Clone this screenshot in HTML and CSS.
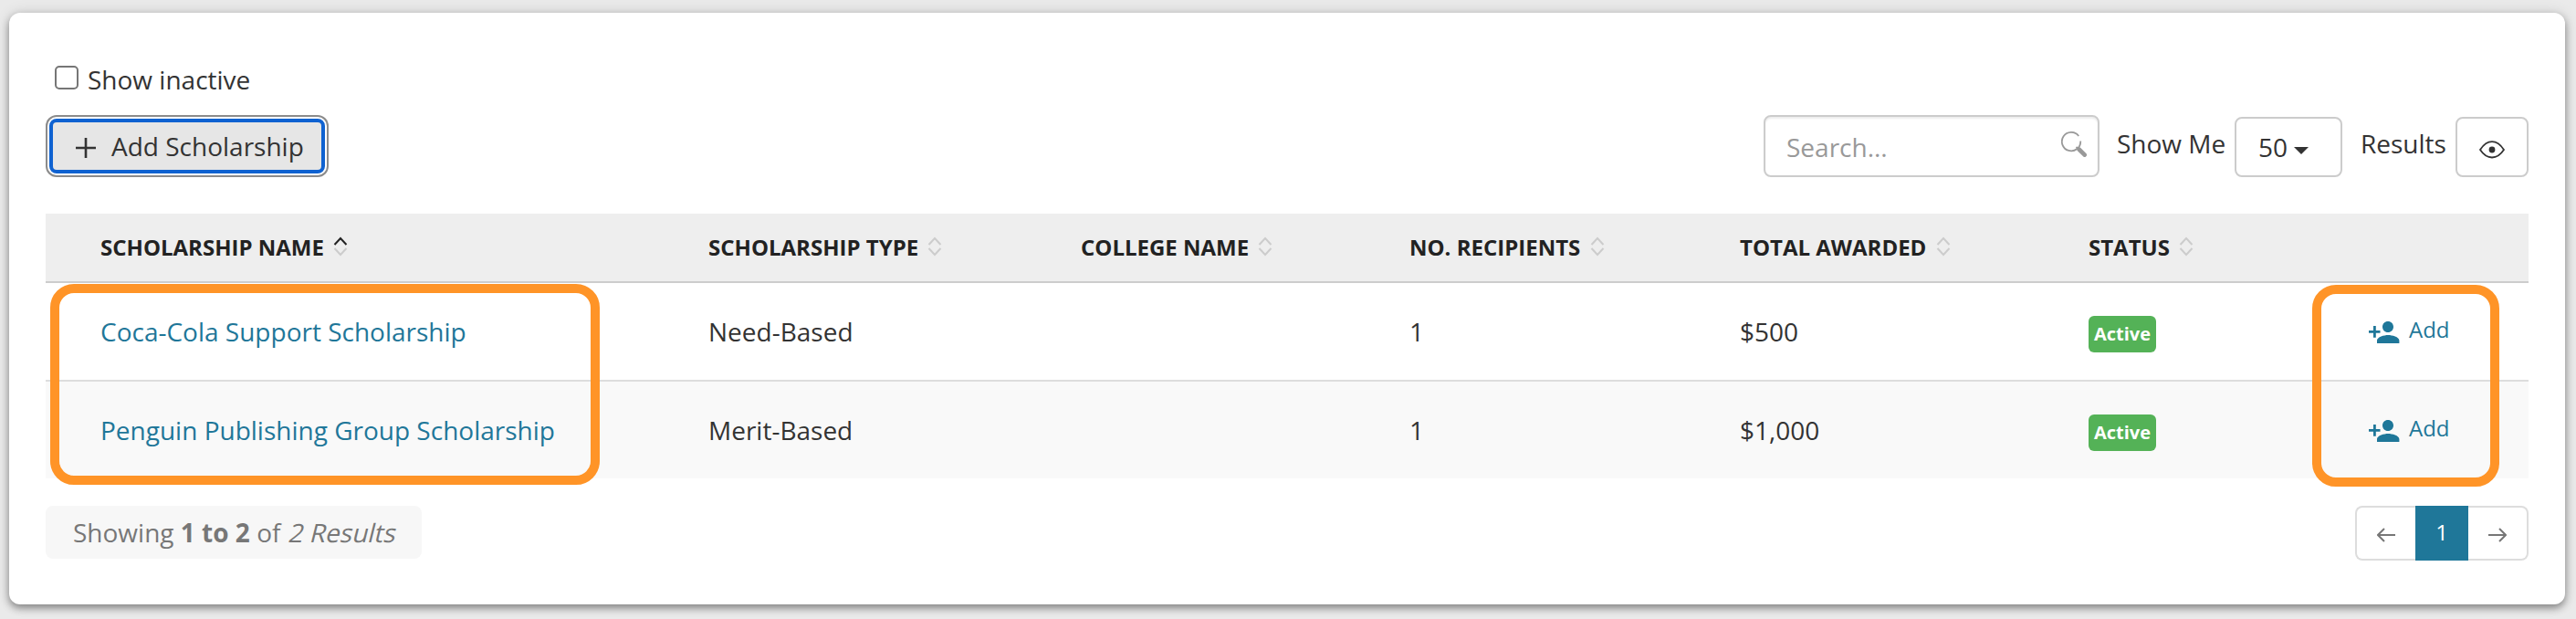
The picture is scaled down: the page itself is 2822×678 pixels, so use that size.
FILE: index.html
```
<!DOCTYPE html>
<html lang="en">
<head>
  <meta charset="UTF-8" />
  <meta name="viewport" content="width=device-width, initial-scale=1.0" />
  <title>Scholarships</title>
  <link rel="stylesheet" href="styles.css">
</head>
<body>
  <svg class="sprite">
    <symbol id="sort" viewBox="0 0 16 22">
      <path class="up" d="M1.5 9 L8 2 L14.5 9" />
      <path class="down" d="M1.5 13 L8 20 L14.5 13" />
    </symbol>
    <symbol id="person-add" viewBox="0 0 34 24">
      <path d="M21 0c3.400 0 6 2.600 6 6s-2.600 6-6 6-6-2.600-6-6 2.600-6 6-6zM9 24v-3c0-4 8-6 12.200-6s12.200 2 12.200 6v3zM5 5h2.800v5h4.700v2.800h-4.700v5h-2.800v-5h-5v-2.800h5z" />
    </symbol>
  </svg>

  <div class="card">
    <label class="inactive"><input type="checkbox"> Show inactive</label>

    <div class="toolbar">
      <button class="btn-add">
        <svg width="22" height="22" viewBox="0 0 22 22"><path d="M11 0v22M0 11h22" /></svg>
        Add Scholarship
      </button>
      <div class="tools">
        <div class="search">
          <input type="text" placeholder="Search...">
          <svg width="28" height="28" viewBox="0 0 28 28">
            <path class="ring" d="M19.200 5A10.200 10.200 0 1 0 21.200 10.500" />
            <path class="handle" d="M19.500 19.500l6.200 6.200" />
            <path class="ring" d="M16.500 17l3 3" />
          </svg>
        </div>
        <span class="show-me">Show Me</span>
        <button class="btn btn-count">50 <i class="caret"></i></button>
        <span class="results">Results</span>
        <button class="btn btn-eye">
          <svg width="28" height="20" viewBox="0 0 28 20">
            <path d="M1 10C5 4 9.500 1.200 14 1.200S23 4 27 10C23 16 18.500 18.500 14 18.500S5 16 1 10z" />
            <circle cx="14" cy="10" r="3.400" />
          </svg>
        </button>
      </div>
    </div>

    <div class="table-wrap">
      <table>
        <thead>
          <tr>
            <th class="col-name">Scholarship Name <svg class="sort asc"><use href="#sort" /></svg></th>
            <th class="col-type">Scholarship Type <svg class="sort"><use href="#sort" /></svg></th>
            <th class="col-college">College Name <svg class="sort"><use href="#sort" /></svg></th>
            <th class="col-recipients">No. Recipients <svg class="sort"><use href="#sort" /></svg></th>
            <th class="col-total">Total Awarded <svg class="sort"><use href="#sort" /></svg></th>
            <th class="col-status">Status <svg class="sort"><use href="#sort" /></svg></th>
            <th></th>
          </tr>
        </thead>
        <tbody>
          <tr>
            <td><a href="#">Coca-Cola Support Scholarship</a></td>
            <td>Need-Based</td>
            <td></td>
            <td>1</td>
            <td>$500</td>
            <td><span class="badge">Active</span></td>
            <td><a href="#" class="add"><svg width="34" height="24"><use href="#person-add" /></svg>Add</a></td>
          </tr>
          <tr>
            <td><a href="#">Penguin Publishing Group Scholarship</a></td>
            <td>Merit-Based</td>
            <td></td>
            <td>1</td>
            <td>$1,000</td>
            <td><span class="badge">Active</span></td>
            <td><a href="#" class="add"><svg width="34" height="24"><use href="#person-add" /></svg>Add</a></td>
          </tr>
        </tbody>
      </table>
      <div class="mark mark-names"></div>
      <div class="mark mark-actions"></div>
    </div>

    <div class="footer">
      <div class="showing">Showing <b>1 to 2</b> of <i class="total">2 Results</i></div>
      <div class="pager">
        <a href="#"><svg width="20" height="16" viewBox="0 0 20 16"><path d="M20 8H1M8 1L1 8l7 7" /></svg></a>
        <a href="#" class="current">1</a>
        <a href="#"><svg width="20" height="16" viewBox="0 0 20 16"><path d="M0 8h19M12 1l7 7-7 7" /></svg></a>
      </div>
    </div>
  </div>
</body>
</html>
```
FILE: styles.css
```
* { box-sizing: border-box; }
body { margin: 0; padding: 14px 12px 16px 10px; height: 678px; overflow: hidden; background: #eaeaea; font-family: "Open Sans", sans-serif; font-size: 28px; line-height: 40px; color: #333; }
a { color: #1f7799; text-decoration: none; }
button, input { font: inherit; color: inherit; margin: 0; }
svg { display: block; }
.sprite { position: absolute; width: 0; height: 0; }

.card { height: 648px; padding: 53px 40px 0; background: white; border-radius: 12px; box-shadow: 0 4px 8px rgba(0,0,0,0.4), 0 0 16px rgba(0,0,0,0.12); }

.inactive { display: flex; align-items: center; gap: 10px; height: 40px; padding-left: 10px; }
.inactive input { appearance: none; width: 26px; height: 26px; margin-top: -4px; background: white; border: 2px solid #767676; border-radius: 5px; }

/* toolbar */
.toolbar { display: flex; justify-content: space-between; margin-top: 19px; height: 68px; }
.btn-add { display: flex; align-items: center; gap: 17px; width: 302px; height: 60px; margin: 4px; padding: 0 0 1px 25px; white-space: nowrap; background: #e6e6e6; border: 4px solid #0f62d1; border-radius: 8px; box-shadow: 0 0 0 2px white, 0 0 0 4px #8b8b8b; }
.btn-add svg { margin-top: 5px; }
.btn-add path { stroke: #333; stroke-width: 2.6; }
.tools { display: flex; align-items: flex-end; }
.search { display: flex; align-items: center; width: 368px; height: 68px; padding: 0 12px 0 23px; border: 2px solid #ccc; border-radius: 8px; box-shadow: inset 0 2px 2px rgba(0,0,0,0.08); }
.search input { flex: 1; width: 0; height: 40px; padding: 2px 0 0; border: 0; outline: 0; background: none; }
.search input::placeholder { color: #999; opacity: 1; }
.search svg { margin-top: -4px; fill: none; stroke: #999; }
.ring { stroke-width: 1.8; }
.handle { stroke-width: 4.6; stroke-linecap: round; }
.show-me { width: 148px; padding-left: 19px; margin-bottom: 17px; white-space: nowrap; }
.results { width: 124px; padding-left: 20px; margin-bottom: 17px; }
.btn { display: flex; align-items: center; height: 66px; padding: 0; background: white; border: 2px solid #ccc; border-radius: 8px; }
.btn-count { width: 118px; padding-left: 24px; gap: 7px; }
.caret { margin-top: 7px; border: 8px solid transparent; border-top-color: #333; border-bottom: 0; }
.btn-eye { width: 80px; justify-content: center; }
.btn-eye svg { margin-top: 6px; fill: none; stroke: #333; stroke-width: 1.8; }
.btn-eye circle { fill: #333; stroke: none; }

/* table */
.table-wrap { position: relative; margin-top: 40px; }
table { width: 100%; table-layout: fixed; border-collapse: separate; border-spacing: 0; }
th, td { padding: 0; text-align: left; vertical-align: middle; white-space: nowrap; }
th { height: 76px; background: #eee; border-bottom: 2px solid #ccc; color: #222; font-size: 24px; text-transform: uppercase; }
td { height: 106px; }
th:first-child, td:first-child { padding-left: 60px; }
tbody tr + tr td { height: 108px; background: #f9f9f9; border-top: 2px solid #ddd; }
.col-name { width: 726px; }
.col-type { width: 408px; }
.col-college { width: 360px; }
.col-recipients { width: 362px; }
.col-total { width: 382px; }
.col-status { width: 307px; }
.sort { display: inline-block; width: 16px; height: 22px; margin-left: 4px; vertical-align: -1px; fill: none; stroke: #ccc; stroke-width: 2; }
.asc { color: #222; }
.up { stroke: currentColor; }
.sort:not(.asc) { color: #ccc; }
.badge { display: block; width: 74px; height: 40px; margin: 5px 0 0; border-radius: 6px; background: #54b257; color: white; font-size: 20px; font-weight: bold; text-align: center; }
.add { display: flex; align-items: center; gap: 10px; font-size: 24px; margin-top: -4px; }
.add svg { fill: #1f7799; margin-top: 6px; }

/* highlights drawn over the table */
.mark { position: absolute; border: 10px solid #ff9427; border-radius: 26px; }
.mark-names { left: 5px; top: 77px; width: 602px; height: 220px; }
.mark-actions { left: 2483px; top: 78px; width: 205px; height: 221px; }

.footer { display: flex; justify-content: space-between; margin-top: 30px; }
.showing { width: 412px; height: 58px; padding: 9px 0 0 30px; background: #f7f7f7; border-radius: 8px; color: #777; white-space: nowrap; }
.total { display: inline-block; font-style: normal; transform: skewX(-14deg); transform-origin: 0 31px; }
.pager { display: flex; width: 190px; height: 60px; font-size: 24px; }
.pager a { display: flex; align-items: center; justify-content: center; width: 66px; border: 2px solid #ddd; }
.pager a:first-child { border-right: 0; border-radius: 8px 0 0 8px; }
.pager a:last-child { border-left: 0; border-radius: 0 8px 8px 0; }
.pager .current { width: 58px; padding-bottom: 3px; background: #1f7799; border-color: #1f7799; color: white; }
.pager svg { margin-top: 4px; fill: none; stroke: #777; stroke-width: 2; }
```
